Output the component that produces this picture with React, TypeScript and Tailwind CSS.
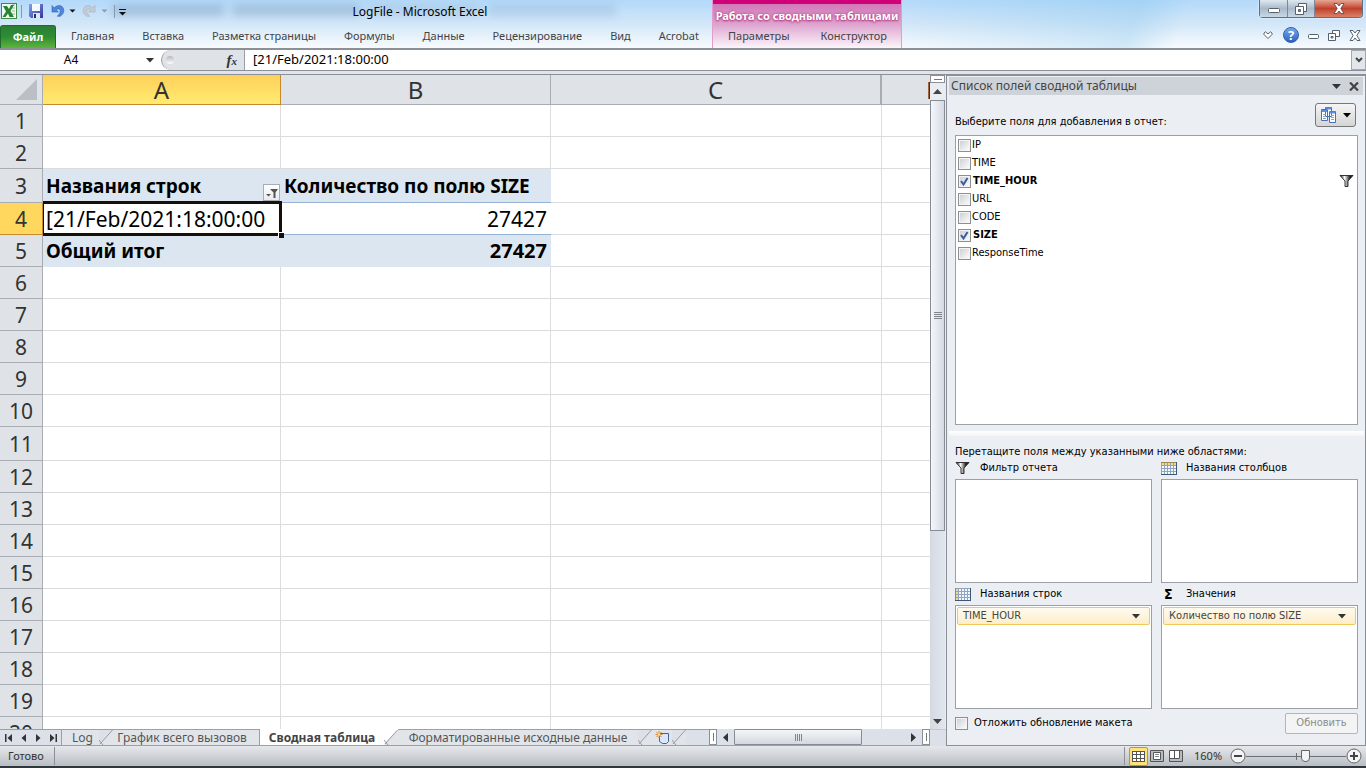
import type { ReactNode } from 'react';

const ribbonTabs = ['Главная', 'Вставка', 'Разметка страницы', 'Формулы', 'Данные', 'Рецензирование', 'Вид', 'Acrobat'];
const fields = [
  { name: 'IP', on: false },
  { name: 'TIME', on: false },
  { name: 'TIME_HOUR', on: true, filtered: true },
  { name: 'URL', on: false },
  { name: 'CODE', on: false },
  { name: 'SIZE', on: true },
  { name: 'ResponseTime', on: false },
];
const rowNumbers = Array.from({ length: 20 }, (_, i) => i + 1);

function Down({ className = '' }: { className?: string }) {
  return (
    <svg width="8" height="5" viewBox="0 0 8 5" className={className} fill="currentColor" aria-hidden="true">
      <path d="M0 0h8L4 4.500z" />
    </svg>
  );
}

function Funnel() {
  return (
    <svg width="15" height="12" viewBox="0 0 15 12" aria-hidden="true">
      <defs>
        <linearGradient id="funnel" x1="0" x2="1">
          <stop offset=".1" stopColor="#555" />
          <stop offset=".35" stopColor="#fff" />
          <stop offset=".75" stopColor="#222" />
        </linearGradient>
      </defs>
      <path d="M1 .5h13L9 6v5.500H6V6z" fill="url(#funnel)" stroke="#222" strokeWidth=".9" />
    </svg>
  );
}

function GridIcon({ side }: { side: 'top' | 'left' }) {
  return (
    <svg width="16" height="13" viewBox="0 0 16 13" shapeRendering="crispEdges" aria-hidden="true">
      <rect width="16" height="13" fill="#8ea5c2" />
      {[0, 1, 2, 3].map((r) =>
        [0, 1, 2, 3, 4].map((c) => (
          <rect
            key={`${r}-${c}`}
            x={1 + c * 3}
            y={1 + r * 3}
            width="2"
            height="2"
            fill={(side === 'top' ? r === 0 : c === 0) ? '#f3d88c' : '#f4f8fd'}
          />
        )),
      )}
      <path d={side === 'top' ? 'M0 .5h16' : 'M.5 0v13'} stroke="#a08a50" />
      <path d="M0 12.500h16M15.500 0v13" stroke="#3c5878" />
    </svg>
  );
}

function TitleBar() {
  return (
    <header className="relative flex h-12 shrink-0 bg-linear-to-b from-[#b3d9fa] via-[#d3e7f8] to-[#f8fbfe]">
      <div className="flex min-w-0 flex-[712] flex-col">
        <div className="relative flex h-6 items-center">
          <div className="absolute top-1 left-28 flex gap-2 opacity-40 blur-[4px]" aria-hidden="true">
            <i className="h-3 w-28 bg-[#7495b4]" />
            <i className="h-3 w-32 bg-[#7d9ab8]" />
            <i className="h-3 w-28 bg-[#9bbbd6]" />
            <i className="h-3 w-32 bg-[#95b7d4]" />
          </div>
          <div className="relative flex h-6 w-32 items-center">
            <svg width="128" height="24" viewBox="0 0 128 24" role="img" aria-label="Панель быстрого доступа">
              <defs>
                <linearGradient id="save" x1="0" y1="0" x2="1" y2="1">
                  <stop offset="0" stopColor="#7fa2f2" />
                  <stop offset="1" stopColor="#35349b" />
                </linearGradient>
              </defs>
              <rect x="1.5" y="3.5" width="15" height="15" fill="#f2f8ef" stroke="#3d8b43" />
              <path d="M12 5h3M12 8h3M12 11h3M12 14h3" stroke="#8cbd88" />
              <path d="M3 6h4l2 3 2-4h3l-3.500 6L14 17H9.500L8 13.500 5.500 17H2.500L6 11.500z" fill="#278334" />
              <path d="M21.500 5v13M114.500 5v13" stroke="#8798a8" />
              <path d="M29 4h14v14H31l-2-2z" fill="url(#save)" />
              <path d="M32 4h8v7h-8z" fill="#f6f9ff" />
              <path d="M33 13h7v5h-7z" fill="#dfe5f4" />
              <path d="M34 14h2v4h-2z" fill="#2b2c64" />
              <path d="M52 5.500v6.500h6.500l-2.300-2.200c1.800-1.600 4-1 4 1.400 0 2-1.200 3.300-3 5h3.200c2.200-1.600 3.400-3.300 3.400-5.600 0-5.200-5.800-6.800-9.600-2.700z" fill="#4f86dc" stroke="#2e5fb6" strokeWidth=".6" />
              <path d="M69.500 9.500h6l-3 3z" fill="#111" />
              <path d="M95 5.500v6.500h-6.500l2.300-2.200c-1.800-1.600-4-1-4 1.400 0 2 1.200 3.300 3 5h-3.200c-2.200-1.600-3.400-3.300-3.400-5.600 0-5.200 5.800-6.800 9.600-2.700z" fill="#c4ccd3" stroke="#a5afb8" strokeWidth=".6" />
              <path d="M101.500 9.500h6l-3 3z" fill="#8b99a6" />
              <path d="M119 9.500h7" stroke="#111" />
              <path d="M119 12h7l-3.500 3.500z" fill="#111" />
            </svg>
          </div>
          <h1 className="absolute inset-x-32 -right-0 text-center text-[12px] leading-6 whitespace-nowrap text-black">LogFile - Microsoft Excel</h1>
        </div>
        <nav className="flex h-6 items-stretch text-[11px] text-[#444]">
          <button className="mt-px mr-px w-14 shrink-0 rounded-t-[3px] border border-b-0 border-[#1f6b2b] bg-linear-to-b from-[#2c7e36] via-[#2f8d32] to-[#5cb53f] font-bold text-white">Файл</button>
          {ribbonTabs.map((tab) => (
            <button key={tab} className="px-[14px] whitespace-nowrap">{tab}</button>
          ))}
        </nav>
      </div>
      <div className="flex w-[190px] shrink-0 flex-col border-x border-[#e39ccb] bg-linear-to-b from-[#cf6fb4] via-[#dda3cf] to-[#fbf6fb]">
        <div className="flex h-6 items-center justify-center border-t-4 border-[#cf0078] pt-1 text-[11px] font-bold whitespace-nowrap text-white">
          <span className="[text-shadow:0_0_3px_#b3357f,0_1px_2px_#b3357f]">Работа со сводными таблицами</span>
        </div>
        <nav className="flex h-6 text-[11px] text-[#444]">
          <button className="px-[15px]">Параметры</button>
          <button className="px-4">Конструктор</button>
        </nav>
      </div>
      <div className="flex min-w-0 flex-[464] flex-col items-end bg-linear-110 from-transparent via-[#80c2ea]/30 to-transparent to-60%">
        <div className="mr-[3px] flex h-[18px] rounded-b-[4px] border border-t-0 border-[#5f6f80] shadow-[0_0_2px_#fff]">
          <button aria-label="Свернуть" className="flex w-[28px] items-center justify-center border-r border-[#7b8997] bg-linear-to-b from-[#dfe8f0] via-[#a9b9c9] to-[#c9d8e5] pt-1">
            <svg width="12" height="5"><rect x=".5" y=".5" width="11" height="4" rx="1" fill="#fff" stroke="#55606c" /></svg>
          </button>
          <button aria-label="Развернуть" className="flex w-[27px] items-center justify-center border-r border-[#7b8997] bg-linear-to-b from-[#dfe8f0] via-[#a9b9c9] to-[#c9d8e5]">
            <svg width="12" height="12" fill="#fff" stroke="#55606c"><path d="M3.500.5h8v8h-8z" /><path d="M.5 3.500h8v8h-8z" /><path d="M3.500 6.500h2v2h-2z" fill="#8494a4" /></svg>
          </button>
          <button aria-label="Закрыть" className="flex w-[47px] items-center justify-center rounded-br-[3px] bg-linear-to-b from-[#e6a595] via-[#c0402a] to-[#d98067]">
            <svg width="12" height="11" viewBox="0 0 12 11"><path d="M1 .5h3l2 2.500 2-2.500h3L7.800 5.500l3.200 5H8L6 8l-2 2.500H1l3.200-5z" fill="#fff" stroke="#5b3b42" strokeWidth=".8" /></svg>
          </button>
        </div>
        <div className="mt-[5px] mr-[5px] flex h-6 items-center gap-[9px] text-[#55606c]">
          <button aria-label="Свернуть ленту" className="pr-px"><svg width="10" height="8" viewBox="0 0 10 8"><path d="M1 2l1.500-1.200L5 3l2.500-2.200L9 2v1.500l-4 4-4-4z" fill="#fff" stroke="currentColor" /></svg></button>
          <button aria-label="Справка" className="flex size-4 items-center justify-center rounded-full border border-[#2c5fae] bg-linear-to-b from-[#78a8e8] to-[#2b62c2] text-[13px] leading-none font-bold text-white">?</button>
          <button aria-label="Свернуть книгу" className="pt-[2px]"><svg width="11" height="5"><rect x=".5" y=".5" width="10" height="4" rx="1" fill="#fff" stroke="currentColor" /></svg></button>
          <button aria-label="Восстановить книгу"><svg width="12" height="11" fill="#fff" stroke="currentColor"><path d="M4.500.5h7v6h-7z" /><path d="M.5 3.500h7v7h-7z" /><path d="M3 6.500h2v1.500H3z" /></svg></button>
          <button aria-label="Закрыть книгу"><svg width="12" height="11" viewBox="0 0 12 11"><path d="M1 .5h3l2 2.500 2-2.500h3L7.800 5.500l3.200 5H8L6 8l-2 2.500H1l3.200-5z" fill="#fff" stroke="currentColor" /></svg></button>
        </div>
      </div>
    </header>
  );
}

function FormulaBar() {
  return (
    <div className="flex h-[23px] shrink-0 border-t-2 border-b border-[#8b9097] bg-white text-[12px]">
      <input aria-label="Имя ячейки" defaultValue="A4" className="w-[142px] min-w-0 text-center outline-none" />
      <button aria-label="Список имён" className="flex w-4 items-center justify-center text-[#333]"><Down /></button>
      <div className="ml-[3px] flex w-[83px] items-center justify-between rounded-l-[10px] border-l border-[#9a9fa6] bg-[#dfe3e8] pr-[7px] pl-1">
        <span className="size-2 rounded-full bg-linear-to-b from-[#b4b9bf] to-white" />
        <button aria-label="Вставить функцию" className="font-['Liberation_Serif',serif] text-[15px] leading-none font-bold text-[#333] italic">f<span className="text-[11px]">x</span></button>
      </div>
      <input aria-label="Строка формул" defaultValue="[21/Feb/2021:18:00:00" className="min-w-0 flex-1 border-l border-[#9a9fa6] pl-2 text-[13px] outline-none" />
      <button aria-label="Развернуть строку формул" className="flex w-[15px] items-center justify-center border border-[#a5a9ae] bg-[#e2e5e9]">
        <svg width="8" height="6" viewBox="0 0 8 6" fill="none" stroke="#444" strokeWidth="2"><path d="M1 1l3 3 3-3" /></svg>
      </button>
    </div>
  );
}

function DataCells({ n }: { n: number }) {
  if (n === 3)
    return (
      <>
        <td className="relative bg-[#dce6f1] pl-[3px] text-[19px] font-bold whitespace-nowrap">
          Названия строк
          <button aria-label="Фильтр" className="absolute right-px bottom-0.5 flex size-[17px] items-center justify-center border border-[#a9adb3] bg-linear-to-b from-white to-[#e8ebef]">
            <svg width="12" height="10" viewBox="0 0 12 10" fill="#555"><path d="M4 1h8L9.500 4.500V10h-2V4.500z" /><path d="M0 6h5L2.500 8.500z" /></svg>
          </button>
        </td>
        <td className="border-b border-[#95b3d7] bg-[#dce6f1] pl-[3px] text-[19px] font-bold whitespace-nowrap">Количество по полю SIZE</td>
      </>
    );
  if (n === 4)
    return (
      <>
        <td className="relative pl-[3px] whitespace-nowrap">
          [21/Feb/2021:18:00:00
          <span className="pointer-events-none absolute -top-0.5 -right-px -bottom-px left-0 z-10 border-[3px] border-l border-[#161008]" />
          <span className="absolute -right-[3px] -bottom-[3px] z-20 size-[6px] border border-r-0 border-b-0 border-white bg-[#161008]" />
        </td>
        <td className="border-b border-[#95b3d7] pr-1 text-right">27427</td>
      </>
    );
  if (n === 5)
    return (
      <>
        <td className="bg-[#dce6f1] pl-[3px] text-[19px] font-bold">Общий итог</td>
        <td className="bg-[#dce6f1] pr-1 text-right text-[20px] font-bold">27427</td>
      </>
    );
  return (
    <>
      <td className="border-r border-b border-[#dadcdd]" />
      <td className="border-r border-b border-[#dadcdd]" />
    </>
  );
}

function Sheet() {
  return (
    <div className="min-w-0 flex-1 overflow-hidden bg-white">
      <table className="w-full table-fixed border-separate border-spacing-0 text-[21px] leading-6 text-black">
        <colgroup>
          <col className="w-[43px]" />
          <col className="w-[238px]" />
          <col className="w-[270px]" />
          <col className="w-[331px]" />
          <col />
        </colgroup>
        <thead>
          <tr className="h-[30px] text-[24px] leading-7 text-[#333]">
            <th scope="col" aria-label="Выделить всё" className="border-r border-b border-[#a9adb3] bg-[#dfe3e8]">
              <svg width="22" height="21" className="ml-auto mr-1" aria-hidden="true"><path d="M21 0v21H0z" fill="#b9bfc5" /></svg>
            </th>
            <th scope="col" className="border-r border-b border-[#c88b2c] bg-linear-to-b from-[#fdd05a] to-[#ffeb70] font-normal">A</th>
            <th scope="col" className="border-r border-b border-[#a9adb3] bg-[#dfe3e8] font-normal">B</th>
            <th scope="col" className="border-r-2 border-b border-[#a9adb3] bg-[#dfe3e8] font-normal">C</th>
            <th scope="col" className="overflow-hidden border-b border-[#a9adb3] bg-[#dfe3e8] pl-[44px] text-left font-normal">D</th>
          </tr>
        </thead>
        <tbody>
          {rowNumbers.map((n) => (
            <tr key={n} className={n === 3 || n === 11 ? 'h-[34px]' : 'h-8'}>
              <th
                scope="row"
                className={
                  n === 4
                    ? 'border-r border-b border-[#c88b2c] bg-[#ffd75e] font-normal text-[#333]'
                    : 'border-r border-b border-[#a9adb3] bg-[#dfe3e8] font-normal text-[#333]'
                }
              >
                {n}
              </th>
              <DataCells n={n} />
              <td className="border-r border-b border-[#dadcdd]" />
              <td className="border-b border-[#dadcdd]" />
            </tr>
          ))}
        </tbody>
      </table>
    </div>
  );
}

function VerticalScroll() {
  return (
    <div className="flex w-4 shrink-0 flex-col items-center border-r border-[#e8ebf0] bg-linear-to-r from-[#d5d9e2] to-[#e2e6ee]">
      <div className="flex h-[8px] w-full items-center justify-center border border-[#8b9097] bg-white"><i className="h-px w-2 bg-[#777]" /></div>
      <button aria-label="Вверх" className="flex h-[17px] w-full items-center justify-center bg-[#e9ecf1] text-[#444]">
        <svg width="9" height="5" fill="currentColor"><path d="M0 5h9L4.500 0z" /></svg>
      </button>
      <div className="flex w-full flex-1 flex-col">
        <button aria-label="Прокрутка по вертикали" className="flex w-full flex-[430] flex-col items-center justify-center gap-px border border-[#868c96] bg-linear-to-r from-[#f4f6f9] to-[#d5dae4]">
          {[1, 2, 3, 4].map((i) => <i key={i} className="h-px w-2 bg-[#80858c]" />)}
        </button>
        <div className="flex-[183]" />
      </div>
      <button aria-label="Вниз" className="flex h-4 w-full items-center justify-center text-[#444]">
        <svg width="9" height="5" fill="currentColor"><path d="M0 0h9L4.500 5z" /></svg>
      </button>
    </div>
  );
}

function Slant() {
  return (
    <svg width="14" height="15" viewBox="0 0 14 15" className="shrink-0" aria-hidden="true">
      <path d="M13.500 0L.5 13v2H14V0z" fill="#e1e5ea" />
      <path d="M13.500 0L1 14M0 10l4 5" fill="none" stroke="#979ca3" />
    </svg>
  );
}

function SheetTabs() {
  return (
    <div className="flex h-[17px] shrink-0 bg-[#dce0e8]">
      <div className="flex min-w-0 flex-1 border-t border-b border-[#9b9fa6] text-[12px] leading-[15px] text-[#555]">
        <div className="flex w-[62px] shrink-0 items-center justify-between border-r border-[#9b9fa6] pr-1 pl-[5px] text-[#333]">
          <button aria-label="Первый лист"><svg width="8" height="8" fill="currentColor"><path d="M0 0h1.500v8H0zM7 0v8L2.500 4z" /></svg></button>
          <button aria-label="Предыдущий лист"><svg width="6" height="8" fill="currentColor"><path d="M5 0v8L.5 4z" /></svg></button>
          <button aria-label="Следующий лист"><svg width="6" height="8" fill="currentColor"><path d="M1 0v8l4.500-4z" /></svg></button>
          <button aria-label="Последний лист"><svg width="8" height="8" fill="currentColor"><path d="M6.500 0H8v8H6.500zM1 0v8l4.500-4z" /></svg></button>
        </div>
        <button className="w-[37px] shrink-0 bg-[#e1e5ea] pl-1">Log</button>
        <Slant />
        <button className="w-[147px] shrink-0 border-r border-[#9b9fa6] bg-[#e1e5ea] pr-2 whitespace-nowrap">График всего вызовов</button>
        <button className="-mt-px w-[124px] shrink-0 bg-white text-[12px] font-bold whitespace-nowrap text-[#444]">Сводная таблица</button>
        <div className="-mt-px flex shrink-0 bg-white pt-px"><Slant /></div>
        <button className="w-[240px] shrink-0 bg-[#e1e5ea] whitespace-nowrap">Форматированные исходные данные</button>
        <Slant />
        <button aria-label="Вставить лист" className="flex w-5 shrink-0 items-center justify-center bg-[#e1e5ea]">
          <svg width="15" height="13" viewBox="0 0 15 13"><path d="M4.500 2.500h9v8l-2 2h-4l-3-2z" fill="#d9e6fb" stroke="#49628f" /><path d="M4 0v7M.5 3.500h7M1.500 1l5 5M6.500 1l-5 5" stroke="#d8882c" /><circle cx="4" cy="3.500" r="1.200" fill="#ffe9a0" /></svg>
        </button>
        <Slant />
      </div>
      <div className="flex w-[221px] shrink-0 border-b border-[#9b9fa6]">
        <div className="flex w-[8px] items-center justify-center border border-[#8b9097] bg-white"><i className="h-2 w-px bg-[#777]" /></div>
        <button aria-label="Влево" className="flex w-[17px] items-center justify-center text-[#333]"><svg width="5" height="9" fill="currentColor"><path d="M5 0v9L0 4.500z" /></svg></button>
        <button aria-label="Прокрутка по горизонтали" className="flex w-[128px] items-center justify-center gap-px rounded-[1px] border border-[#868c96] bg-linear-to-b from-[#f4f6f9] to-[#d3d8df]">
          {[1, 2, 3, 4].map((i) => <i key={i} className="h-[7px] w-px bg-[#80858c]" />)}
        </button>
        <div className="flex-1" />
        <button aria-label="Вправо" className="flex w-[17px] items-center justify-center text-[#333]"><svg width="5" height="9" fill="currentColor"><path d="M0 0v9l5-4.500z" /></svg></button>
        <div className="flex w-[8px] items-center justify-center border border-[#8b9097] bg-white"><i className="h-2 w-px bg-[#777]" /></div>
      </div>
      <div className="w-4 shrink-0 border-t border-[#c5c9d0]" />
    </div>
  );
}

function Check({ id, label, on = false }: { id: string; label: string; on?: boolean }) {
  return (
    <label htmlFor={id} className={on ? 'flex items-center gap-[2px] font-bold' : 'flex items-center gap-px'}>
      <span className="relative flex">
        <input id={id} type="checkbox" defaultChecked={on} className="peer size-[13px] appearance-none border border-[#8e8f8f] bg-linear-135 from-[#c9cdd3] to-white shadow-[inset_0_0_0_1px_#f4f4f4]" />
        <svg width="13" height="13" viewBox="0 0 13 13" className="pointer-events-none absolute inset-0 hidden peer-checked:block" fill="none" stroke="#3d5a9c" strokeWidth="2"><path d="M3 6l2.500 3.500L9.500 3" /></svg>
      </span>
      {label}
    </label>
  );
}

function Area({ icon, title, item }: { icon: ReactNode; title: string; item?: string }) {
  return (
    <section className="flex flex-col">
      <h3 className="flex h-[22px] items-center">
        <span className="flex w-[25px]">{icon}</span>
        {title}
      </h3>
      <div className="h-[104px] border border-[#9b9fa6] bg-white p-px">
        {item && (
          <button className="flex h-[18px] w-full items-center justify-between rounded-[2px] border border-[#efc95a] bg-linear-to-b from-[#fffaf0] to-[#fdeec7] pr-[9px] pl-[5px] text-[#444]">
            {item}
            <Down className="text-[#333]" />
          </button>
        )}
      </div>
    </section>
  );
}

function FieldPane() {
  return (
    <aside className="flex w-[420px] shrink-0 flex-col border border-t-2 border-[#8b9097] bg-[#ebeef3] font-['DejaVu_Sans_Condensed','DejaVu_Sans',sans-serif] text-[11px] text-black">
      <div className="mx-[2px] mt-px flex h-[18px] shrink-0 items-center bg-[#ced3da] pr-1 pl-[2px] font-['Noto_Sans',sans-serif] text-[#444]">
        <h2 className="flex-1 text-[12px] leading-[18px]">Список полей сводной таблицы</h2>
        <button aria-label="Параметры области" className="mr-2"><svg width="9" height="5" fill="#333"><path d="M0 0h9L4.500 5z" /></svg></button>
        <button aria-label="Закрыть область"><svg width="10" height="9" viewBox="0 0 10 9" stroke="#444" strokeWidth="2.200"><path d="M1 .5l8 8M9 .5l-8 8" /></svg></button>
      </div>
      <div className="flex min-h-0 flex-1 flex-col pr-[7px] pl-2">
        <div className="flex h-10 shrink-0 items-center justify-between">
          <h3 className="pt-[14px]">Выберите поля для добавления в отчет:</h3>
          <button aria-label="Вид списка полей" className="mr-0.5 flex h-6 w-[41px] items-center justify-center gap-1.5 rounded-[3px] border border-[#777] bg-linear-to-b from-[#f5f5f5] to-[#d5d5d5]">
            <svg width="16" height="16" viewBox="0 0 16 16" fill="#fff" stroke="#4a6fb5" aria-hidden="true">
              <path d="M4.500.5h6v9h-6zM.5 2.500h6v11h-6zM8.500 4.500h6v11h-6z" />
              <path d="M1 4h5M5 1.500h5M9 5.500h5" stroke="#5b8fe8" strokeWidth="2" />
              <path d="M2 7.500h3M2 9.500h3M2 11.500h3M10 8.500h3M10 10.500h3M10 12.500h3" stroke="#8aa3c8" />
            </svg>
            <Down />
          </button>
        </div>
        <ul className="min-h-0 flex-1 overflow-hidden border border-[#9b9fa6] bg-white pr-[3px] pl-[2px]">
          {fields.map((f) => (
            <li key={f.name} className="flex h-[18px] items-center justify-between">
              <Check id={`field-${f.name}`} label={f.name} on={f.on} />
              {f.filtered && <Funnel />}
            </li>
          ))}
        </ul>
        <div className="-mx-1.5 mt-[6px] h-[5px] shrink-0 bg-linear-to-b from-white to-[#f3f4f5]" />
        <h3 className="mt-2 h-4 shrink-0 leading-4">Перетащите поля между указанными ниже областями:</h3>
        <div className="-mt-[3px] grid shrink-0 grid-cols-2 gap-x-[9px]">
          <Area icon={<Funnel />} title="Фильтр отчета" />
          <Area icon={<GridIcon side="top" />} title="Названия столбцов" />
          <Area icon={<GridIcon side="left" />} title="Названия строк" item="TIME_HOUR" />
          <Area icon={<span className="pl-[3px] text-[14px] font-bold">Σ</span>} title="Значения" item="Количество по полю SIZE" />
        </div>
        <div className="flex h-9 shrink-0 items-center justify-between pb-[7px]">
          <div className="[&>label]:gap-[6px]"><Check id="defer" label="Отложить обновление макета" /></div>
          <button disabled className="h-[21px] w-[73px] rounded-[2px] border border-[#b5b5b5] bg-[#f4f4f4] text-[#8b8b8b]">Обновить</button>
        </div>
      </div>
    </aside>
  );
}

function StatusBar() {
  return (
    <footer className="flex h-[22px] shrink-0 items-center border-b-2 border-[#30363d] bg-linear-to-b from-[#e6e8eb] to-[#b9bec4] pr-1 text-[11px] text-[#333]">
      <span className="w-[54px] pl-2">Готово</span>
      <i className="h-[18px] w-px bg-[#8b9097]" />
      <div className="flex-1" />
      <i className="mr-1 h-[18px] w-px bg-[#8b9097]" />
      <button aria-label="Обычный" className="mr-[2px] flex h-[19px] w-[19px] items-center justify-center rounded-[2px] border border-[#c79232] bg-[#ffe27a]">
        <svg width="13" height="11" shapeRendering="crispEdges"><path d="M.5.5h12v10H.5zM.5 3.500h12M.5 7.500h12M4.500 0v11M8.500 0v11" fill="#fff" stroke="#555" /></svg>
      </button>
      <button aria-label="Разметка страницы" className="mr-[5px]"><svg width="14" height="12"><path d="M.5.5h13v11H.5z" fill="#b8bcc0" stroke="#555" /><path d="M3.500 2.500h7v7h-7z" fill="#fff" stroke="#555" /><path d="M5 4.500h4M5 6.500h4" stroke="#888" /></svg></button>
      <button aria-label="Страничный режим" className="mr-[11px]"><svg width="14" height="12"><path d="M.5.5h13v11H.5z" fill="#b8bcc0" stroke="#555" /><path d="M1 1h4v7H1zM6 1h4v7H6z" fill="#fff" /><path d="M5.500 0v8.500M10.500 0v8.500M0 8.500h10" stroke="#555" /></svg></button>
      <button className="w-[36px] text-left">160%</button>
      <button aria-label="Уменьшить" className="flex"><svg width="16" height="16"><circle cx="8" cy="8" r="7" fill="#f3f4f5" stroke="#666" /><path d="M4 8h8" stroke="#444" strokeWidth="2" /></svg></button>
      <input
        aria-label="Масштаб"
        type="range"
        min="0"
        max="100"
        defaultValue="60"
        className="h-4 w-[100px] appearance-none bg-[linear-gradient(#6b7076,#6b7076),linear-gradient(#6b7076,#6b7076)] bg-[length:100%_1px,1px_7px] bg-center bg-no-repeat [&::-webkit-slider-thumb]:h-3 [&::-webkit-slider-thumb]:w-[9px] [&::-webkit-slider-thumb]:appearance-none [&::-webkit-slider-thumb]:rounded-b-[4px] [&::-webkit-slider-thumb]:border [&::-webkit-slider-thumb]:border-[#666] [&::-webkit-slider-thumb]:bg-[#f3f4f5]"
      />
      <button aria-label="Увеличить" className="flex"><svg width="16" height="16"><circle cx="8" cy="8" r="7" fill="#f3f4f5" stroke="#666" /><path d="M4 8h8M8 4v8" stroke="#444" strokeWidth="2" /></svg></button>
    </footer>
  );
}

export default function App() {
  return (
    <div className="flex h-screen flex-col overflow-hidden bg-[#e3e3ee] font-['Noto_Sans',sans-serif]">
      <TitleBar />
      <FormulaBar />
      <main className="mt-[3px] flex min-h-0 flex-1">
        <div className="flex min-w-0 flex-1 flex-col">
          <div className="flex min-h-0 flex-1 border-t border-[#8b9097]">
            <Sheet />
            <VerticalScroll />
          </div>
          <SheetTabs />
        </div>
        <FieldPane />
      </main>
      <StatusBar />
    </div>
  );
}
